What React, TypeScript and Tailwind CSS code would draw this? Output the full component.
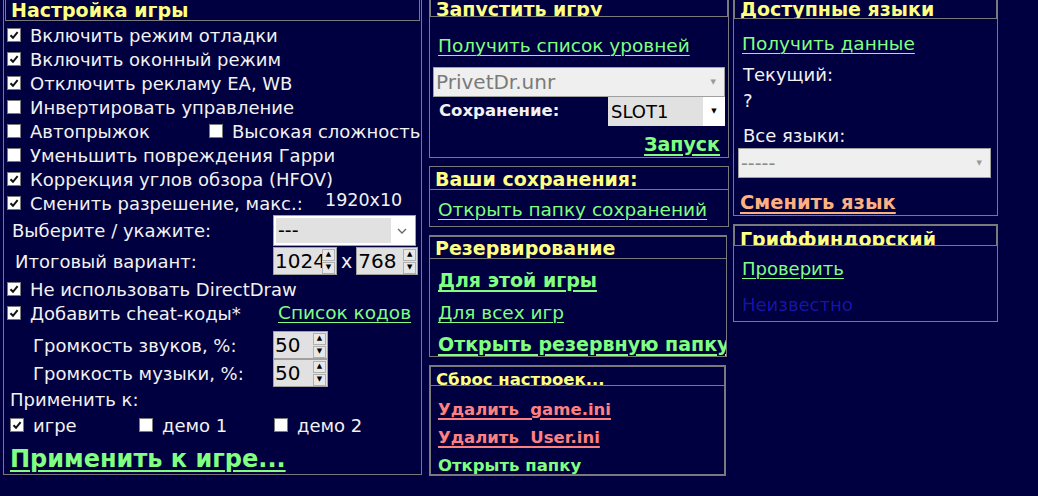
import React from 'react';

const FONT = "font-['DejaVu_Sans','Verdana',sans-serif]";

function Check({ on }: { on?: boolean }) {
  return (
    <span className="inline-flex h-[14px] w-[14px] shrink-0 items-center justify-center border border-[#7a7a7a] bg-white">
      {on && (
        <svg viewBox="0 0 10 10" className="h-[10px] w-[10px]">
          <path d="M1.5 5.2 L4 7.8 L8.6 2.2" fill="none" stroke="#111" strokeWidth="2" />
        </svg>
      )}
    </span>
  );
}

function CheckRow({ on, label, pl = 'pl-[3px]' }: { on?: boolean; label: string; pl?: string }) {
  return (
    <div className={`flex h-6 items-center gap-[9px] ${pl}`}>
      <Check on={on} />
      <span className="whitespace-nowrap">{label}</span>
    </div>
  );
}

function Spin({ value, w }: { value: string; w: string }) {
  return (
    <div className={`flex h-[28px] items-stretch border border-[#a0a0a0] bg-[#e1e1e1] ${w}`}>
      <span className="flex-1 overflow-hidden pl-[1px] text-[20px] leading-[26px] text-black">{value}</span>
      <div className="flex w-[14px] flex-col justify-center gap-[1px] py-[1px] pr-[1px]">
        <span className="flex h-[12px] items-center justify-center border border-[#b0b0b0] bg-[#e8e8e8] text-[7px] text-black">▲</span>
        <span className="flex h-[12px] items-center justify-center border border-[#b0b0b0] bg-[#e8e8e8] text-[7px] text-black">▼</span>
      </div>
    </div>
  );
}

function Header({ title, h, cls = '' }: { title: string; h: string; cls?: string }) {
  return (
    <div className={`shrink-0 overflow-hidden whitespace-nowrap border border-t-0 border-[#7a7a7a] px-[5px] text-[19px] font-bold text-[#ffff80] ${h} ${cls}`}>
      {title}
    </div>
  );
}

function Link({ children, bold, cls = '' }: { children: React.ReactNode; bold?: boolean; cls?: string }) {
  return (
    <span
      className={`whitespace-nowrap text-[#80ff80] underline underline-offset-[3px] ${bold ? 'text-[19px] font-bold decoration-2' : 'text-[18.5px] decoration-1'} ${cls}`}
    >
      {children}
    </span>
  );
}

export default function App() {
  return (
    <div className={`h-[496px] w-[1038px] overflow-hidden bg-[#000040] text-[18px] text-[#f2f2f2] ${FONT}`}>
      <div className="flex items-start pl-[3px]">
        {/* left: game settings */}
        <div className="mr-[7px] flex h-[475px] w-[419px] flex-col overflow-hidden border border-[#7a7a7a] border-t-0">
          <Header title="Настройка игры" h="h-[21px]" cls="mx-[1px] leading-[21px]" />
          <div className="flex flex-col pt-[2px]">
            <CheckRow on label="Включить режим отладки" />
            <CheckRow on label="Включить оконный режим" />
            <CheckRow on label="Отключить рекламу EA, WB" />
            <CheckRow label="Инвертировать управление" />
            <div className="flex h-6 items-center">
              <div className="w-[202px]">
                <CheckRow label="Автопрыжок" />
              </div>
              <CheckRow label="Высокая сложность" />
            </div>
            <CheckRow label="Уменьшить повреждения Гарри" />
            <CheckRow on label="Коррекция углов обзора (HFOV)" />
            <div className="flex h-6 items-center">
              <div className="w-[321px] shrink-0">
                <CheckRow on label="Сменить разрешение, макс.:" />
              </div>
              <span className="-mt-[6px] whitespace-nowrap text-[17.5px]">1920x10</span>
            </div>
            <div className="flex h-[31px] items-center">
              <span className="w-[269px] pl-[8px]">Выберите / укажите:</span>
              <div className="flex h-[31px] w-[143px] items-center border border-[#a0a0a0] bg-white p-[2px]">
                <span className="h-[25px] flex-1 bg-[#e1e1e1] pl-[2px] text-[19px] leading-[24px] text-black">---</span>
                <svg viewBox="0 0 10 6" className="mx-[6px] h-[6px] w-[10px]">
                  <path d="M1 1 L5 5 L9 1" fill="none" stroke="#666" strokeWidth="1.3" />
                </svg>
              </div>
            </div>
            <div className="flex h-[30px] items-center">
              <span className="w-[269px] pl-[11px]">Итоговый вариант:</span>
              <Spin value="1024" w="w-[64px]" />
              <span className="px-[4px] text-[19px]">x</span>
              <Spin value="768" w="w-[62px]" />
            </div>
            <div className="mt-[1px]">
              <CheckRow on label="Не использовать DirectDraw" />
            </div>
            <div className="flex h-6 items-center">
              <div className="w-[274px]">
                <CheckRow on label="Добавить cheat-коды*" />
              </div>
              <Link>Список кодов</Link>
            </div>
            <div className="mt-[6px] flex flex-col">
              <div className="flex items-center">
                <span className="w-[269px] pl-[29px]">Громкость звуков, %:</span>
                <Spin value="50" w="w-[55px]" />
              </div>
              <div className="flex items-center">
                <span className="w-[269px] pl-[29px]">Громкость музыки, %:</span>
                <Spin value="50" w="w-[55px]" />
              </div>
            </div>
            <div className="flex h-6 items-center pl-[6px]">Применить к:</div>
            <div className="mt-[2px] flex h-6 items-center">
              <div className="w-[129px]">
                <CheckRow on label="игре" pl="pl-[6px]" />
              </div>
              <div className="w-[135px]">
                <CheckRow label="демо 1" pl="pl-[6px]" />
              </div>
              <CheckRow label="демо 2" pl="pl-[6px]" />
            </div>
            <div className="mt-[4px] pl-[6px]">
              <Link bold cls="!text-[24px]">Применить к игре...</Link>
            </div>
          </div>
        </div>

        {/* middle column */}
        <div className="mr-[4px] flex w-[300px] flex-col gap-[8px]">
          <div className="flex h-[158px] flex-col border border-[#7a7a7a] border-t-0">
            <Header title="Запустить игру" h="h-[17px]" cls="leading-[19px]" />
            <div className="flex flex-col px-[3px]">
              <div className="pl-[5px] pt-[15px]">
                <Link>Получить список уровней</Link>
              </div>
              <div className="mt-[7px] flex h-[30px] items-center justify-between border border-[#a0a0a0] bg-[#efefef] pl-[2px] pr-[8px] text-[#7a7a7a]">
                <span className="text-[20px] leading-[28px]">PrivetDr.unr</span>
                <span className="text-[7px] text-[#999]">▼</span>
              </div>
              <div className="flex h-[29px] items-center">
                <span className="w-[175px] pl-[6px] text-[16.5px] font-bold">Сохранение:</span>
                <div className="flex h-[29px] flex-1 items-center bg-[#e1e1e1]">
                  <span className="flex-1 pl-[3px] text-black">SLOT1</span>
                  <span className="flex h-full w-[22px] items-center justify-center bg-white text-[7px] text-black">▼</span>
                </div>
              </div>
              <div className="flex justify-end pr-[5px] pt-[4px]">
                <Link bold>Запуск</Link>
              </div>
            </div>
          </div>

          <div className="flex h-[61px] flex-col border border-[#7a7a7a]">
            <div className="h-[23px] shrink-0 overflow-hidden border-b border-[#7a7a7a] px-[5px] text-[19px] font-bold leading-[24px] text-[#ffff80]">
              Ваши сохранения:
            </div>
            <div className="pl-[8px] pt-[6px]">
              <Link>Открыть папку сохранений</Link>
            </div>
          </div>

          <div className="flex h-[122px] w-[298px] flex-col overflow-hidden border border-[#7a7a7a]">
            <div className="h-[23px] shrink-0 overflow-hidden border-b border-t border-[#7a7a7a] px-[5px] text-[19px] font-bold leading-[23px] text-[#ffff80]">
              Резервирование
            </div>
            <div className="flex flex-col gap-[9px] pl-[8px] pt-[10px] leading-[23px]">
              <Link bold>Для этой игры</Link>
              <Link>Для всех игр</Link>
              <Link bold>Открыть резервную папку</Link>
            </div>
          </div>

          <div className="flex h-[111px] w-[297px] flex-col overflow-hidden border-2 border-[#7a7a7a]">
            <div className="h-[19px] shrink-0 overflow-hidden whitespace-nowrap border-b border-[#7a7a7a] px-[5px] text-[16.5px] font-bold leading-[25px] text-[#ffff80]">
              Сброс настроек...
            </div>
            <div className="flex flex-col gap-[8px] pl-[7px] pt-[14px] text-[16.5px] font-bold leading-[20px]">
              <span className="whitespace-pre text-[#ff8080] underline decoration-2 underline-offset-[3px]">Удалить  game.ini</span>
              <span className="whitespace-pre text-[#ff8080] underline decoration-2 underline-offset-[3px]">Удалить  User.ini</span>
              <span className="text-[#80ff80]">Открыть папку</span>
            </div>
          </div>
        </div>

        {/* right column */}
        <div className="flex w-[265px] flex-col gap-[8px]">
          <div className="flex h-[216px] flex-col overflow-hidden border border-[#7a7a7a] border-t-0">
            <Header title="Доступные языки" h="h-[19px]" cls="leading-[19px]" />
            <div className="flex flex-col px-[4px]">
              <div className="pl-[4px] pt-[11px]">
                <Link>Получить данные</Link>
              </div>
              <div className="pl-[5px] pt-[5px] leading-[24px]">Текущий:</div>
              <div className="pl-[5px] leading-[28px]">?</div>
              <div className="pl-[5px] pt-[9px] leading-[24px]">Все языки:</div>
              <div className="flex h-[30px] w-[253px] items-center justify-between border border-[#a0a0a0] bg-[#efefef] pl-[2px] pr-[8px] text-[#8a8a8a]">
                <span className="text-[19px]">-----</span>
                <span className="text-[7px] text-[#999]">▼</span>
              </div>
              <div className="pl-[2px] pt-[10px]">
                <span className="whitespace-nowrap text-[19.5px] font-bold text-[#ffb080] underline decoration-2 underline-offset-[3px]">
                  Сменить язык
                </span>
              </div>
            </div>
          </div>

          <div className="flex h-[98px] flex-col border border-[#7a7a7a]">
            <div className="h-[21px] shrink-0 overflow-hidden whitespace-nowrap border border-[#7a7a7a] px-[5px] text-[19px] font-bold leading-[26px] text-[#ffff80]">
              Гриффиндорский
            </div>
            <div className="flex flex-col pl-[8px] pt-[9px]">
              <Link cls="!text-[18px]">Проверить</Link>
              <span className="pt-[9px] text-[18px] text-[#1414b4] [text-shadow:-1px_0_0_#000]">Неизвестно</span>
            </div>
          </div>
        </div>
      </div>
    </div>
  );
}
